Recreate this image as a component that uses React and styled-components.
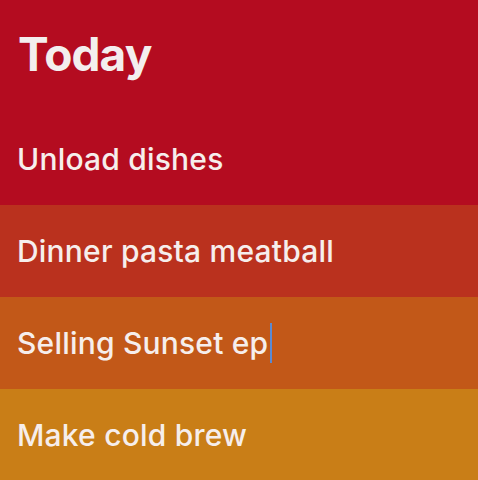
import React from "react";
import styled, { createGlobalStyle } from "styled-components";

const Global = createGlobalStyle`
  html, body { margin: 0; padding: 0; background: #c97e17; }
  body { font-family: Inter, "Noto Sans", sans-serif; -webkit-font-smoothing: antialiased; }
`;

const Page = styled.div`
  display: flex;
  flex-direction: column;
  width: 478px;
  height: 480px;
  overflow: hidden;
`;

const Header = styled.header`
  flex: 0 0 113px;
  background: #b40c20;
  box-sizing: border-box;
  padding: 31px 18px 0;
`;

const Title = styled.h1`
  margin: 0;
  font-size: 46px;
  line-height: 1;
  font-weight: 700;
  color: #f3eeee;
  letter-spacing: -0.9px;
`;

const Row = styled.div`
  flex: 0 0 92px;
  display: flex;
  align-items: center;
  padding: 0 17px;
  background: ${(p) => p.$bg};
  color: #f6eeec;
  font-size: 30px;
  font-weight: 500;
  letter-spacing: 0.2px;
`;

const Caret = styled.span`
  display: inline-block;
  width: 2px;
  height: 40px;
  margin-left: 2px;
  background: #5a8ad2;
`;

const items = [
  { text: "Unload dishes", bg: "#b40c20" },
  { text: "Dinner pasta meatball", bg: "#ba311e" },
  { text: "Selling Sunset ep", bg: "#c25818", caret: true },
  { text: "Make cold brew", bg: "#c97e17" },
];

export default function App() {
  return (
    <>
      <Global />
      <Page>
        <Header>
          <Title>Today</Title>
        </Header>
        {items.map((it) => (
          <Row key={it.text} $bg={it.bg}>
            {it.text}
            {it.caret && <Caret />}
          </Row>
        ))}
      </Page>
    </>
  );
}
